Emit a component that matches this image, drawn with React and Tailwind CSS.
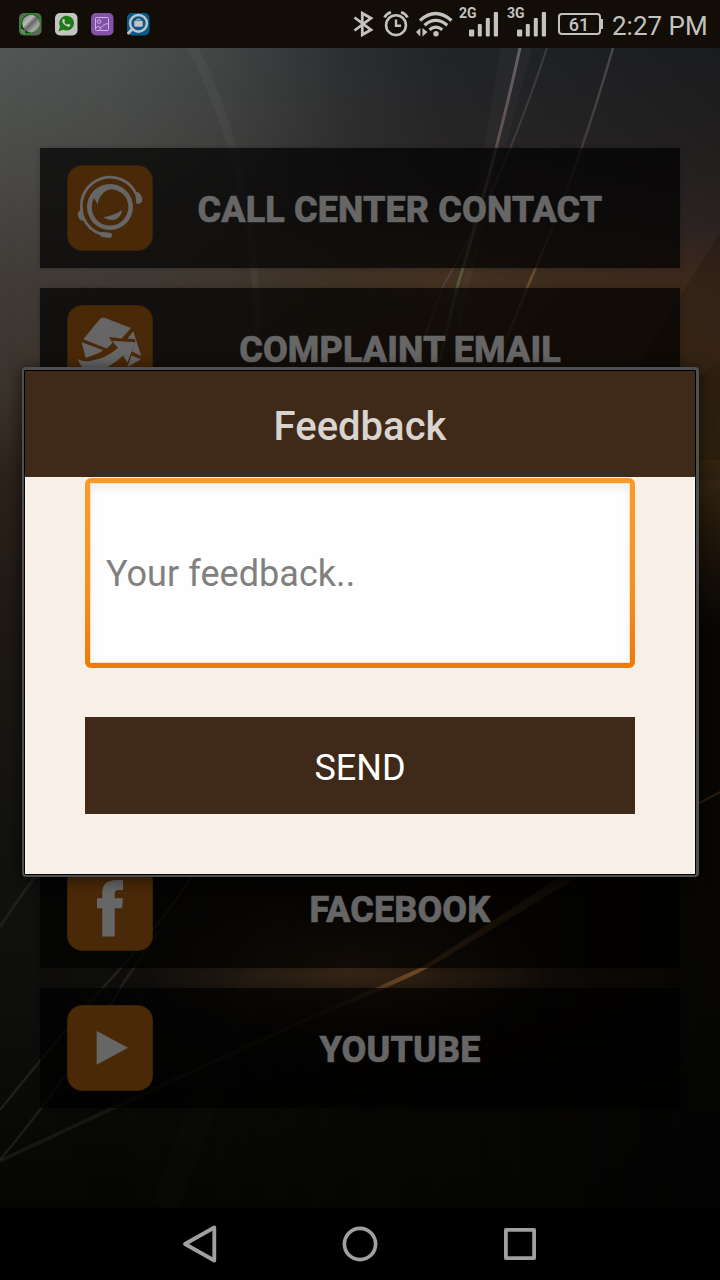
const LIGHT = '#c4c2c0';

function Wallpaper() {
  return (
    <svg className="absolute inset-0 h-full w-full" viewBox="0 48 720 1160" preserveAspectRatio="none" aria-hidden="true">
      <defs>
        <linearGradient id="mid" gradientUnits="userSpaceOnUse" x1="0" y1="48" x2="0" y2="1208">
          <stop offset="0" stopColor="#222529" />
          <stop offset="0.07" stopColor="#272627" />
          <stop offset="0.13" stopColor="#2d2625" />
          <stop offset="0.2" stopColor="#3f2f20" />
          <stop offset="0.3" stopColor="#3c2a18" />
          <stop offset="0.5" stopColor="#150e08" />
          <stop offset="0.8" stopColor="#140e0a" />
          <stop offset="0.9" stopColor="#080705" />
          <stop offset="1" stopColor="#060604" />
        </linearGradient>
        <linearGradient id="left" gradientUnits="userSpaceOnUse" x1="0" y1="48" x2="0" y2="1208">
          <stop offset="0" stopColor="#525654" />
          <stop offset="0.07" stopColor="#4d4f4c" />
          <stop offset="0.13" stopColor="#484643" />
          <stop offset="0.2" stopColor="#403b37" />
          <stop offset="0.29" stopColor="#3b342d" />
          <stop offset="0.37" stopColor="#2c221a" />
          <stop offset="0.48" stopColor="#201914" />
          <stop offset="0.58" stopColor="#181611" />
          <stop offset="0.7" stopColor="#11110f" />
          <stop offset="0.82" stopColor="#0e0e0c" />
          <stop offset="1" stopColor="#050503" />
        </linearGradient>
        <linearGradient id="right" gradientUnits="userSpaceOnUse" x1="0" y1="48" x2="0" y2="1208">
          <stop offset="0" stopColor="#1a1c1f" />
          <stop offset="0.08" stopColor="#211e1e" />
          <stop offset="0.15" stopColor="#2a2222" />
          <stop offset="0.2" stopColor="#3d281b" />
          <stop offset="0.27" stopColor="#3e2a1a" />
          <stop offset="0.35" stopColor="#3c2b14" />
          <stop offset="0.42" stopColor="#20160b" />
          <stop offset="0.5" stopColor="#080604" />
          <stop offset="0.8" stopColor="#070604" />
          <stop offset="1" stopColor="#020202" />
        </linearGradient>
        <linearGradient id="fadeL" x1="0" x2="1" y1="0" y2="0">
          <stop offset="0" stopColor="#fff" />
          <stop offset="0.25" stopColor="#e4e4e4" />
          <stop offset="0.5" stopColor="#a8a8a8" />
          <stop offset="0.8" stopColor="#303030" />
          <stop offset="1" stopColor="#000" />
        </linearGradient>
        <linearGradient id="fadeR" x1="0" x2="1" y1="0" y2="0">
          <stop offset="0" stopColor="#000" />
          <stop offset="1" stopColor="#fff" />
        </linearGradient>
        <mask id="maskL"><rect x="0" y="48" width="440" height="1160" fill="url(#fadeL)" /></mask>
        <mask id="maskR"><rect x="440" y="48" width="280" height="1160" fill="url(#fadeR)" /></mask>
        <radialGradient id="glow">
          <stop offset="0" stopColor="#5d4022" stopOpacity="0.5" />
          <stop offset="0.5" stopColor="#5d4022" stopOpacity="0.22" />
          <stop offset="1" stopColor="#5d4022" stopOpacity="0" />
        </radialGradient>
        <linearGradient id="ray" gradientUnits="userSpaceOnUse" x1="0" y1="48" x2="0" y2="380">
          <stop offset="0" stopColor="#626166" />
          <stop offset="0.3" stopColor="#5e4e48" />
          <stop offset="0.6" stopColor="#5c6040" />
          <stop offset="1" stopColor="#3a3b34" />
        </linearGradient>
        <linearGradient id="ray2" gradientUnits="userSpaceOnUse" x1="0" y1="48" x2="0" y2="380">
          <stop offset="0" stopColor="#484648" />
          <stop offset="0.5" stopColor="#3c3231" />
          <stop offset="0.7" stopColor="#6b4e2e" />
          <stop offset="1" stopColor="#3f3618" />
        </linearGradient>
        <linearGradient id="streak" gradientUnits="userSpaceOnUse" x1="320" y1="1015" x2="578" y2="877">
          <stop offset="0" stopColor="#91602f" stopOpacity="0" />
          <stop offset="0.35" stopColor="#91602f" stopOpacity="0.65" />
          <stop offset="1" stopColor="#91602f" stopOpacity="0.2" />
        </linearGradient>
      </defs>
      <rect x="0" y="48" width="720" height="1160" fill="url(#mid)" />
      <rect x="0" y="48" width="440" height="1160" fill="url(#left)" mask="url(#maskL)" />
      <rect x="440" y="48" width="280" height="1160" fill="url(#right)" mask="url(#maskR)" />
      <ellipse cx="450" cy="282" rx="90" ry="60" fill="url(#glow)" opacity="0.4" />
      <ellipse cx="350" cy="965" rx="210" ry="75" fill="url(#glow)" />
      <path d="M187 48 Q262 190 253 380 L260 380 Q268 190 199 48Z" fill="#fff" fillOpacity="0.035" />
      <path d="M501 48 H532 L468 290 L450 380 L470 230Z" fill="#8080a0" fillOpacity="0.06" />
      <g fill="none">
        <path d="M520 48 Q498 150 457 288 L435 380" stroke="url(#ray)" strokeWidth="3" />
        <path d="M547 48 Q500 190 442 288 L410 380" stroke="#555054" strokeWidth="2" strokeOpacity="0.55" />
        <path d="M613 48 Q575 180 527 288 L492 375" stroke="url(#ray2)" strokeWidth="2.5" />
      </g>
      <path d="M720 232 L680 297 L628 380 V460 H720Z" fill="#120c04" fillOpacity="0.22" />
      <path d="M720 362 L698 378 V480 H720Z" fill="#1c1402" fillOpacity="0.25" />
      <g fill="none" stroke="#67615a">
        <path d="M0 927 Q20 895 60 845" strokeWidth="3" strokeOpacity="0.18" />
        <path d="M0 1110 Q60 1035 110 980 T193 875" strokeWidth="2.5" strokeOpacity="0.24" />
        <path d="M0 1160 Q75 1070 122 985 L160 930" strokeWidth="2.5" strokeOpacity="0.22" />
        <path d="M0 1161 Q150 1090 372 990" strokeWidth="3.5" strokeOpacity="0.16" />
        <path d="M165 1208 Q210 1080 260 968 L285 880" strokeWidth="28" strokeOpacity="0.03" />
      </g>
      <path d="M320 1015 Q380 985 422 967 L560 877 L578 877 L430 967 Q385 990 320 1015Z" fill="url(#streak)" />
      <path d="M698 804 L720 792" stroke="#5a4420" strokeOpacity="0.4" strokeWidth="2" />
    </svg>
  );
}

function CallIcon() {
  return (
    <svg className="h-full w-full" viewBox="0 0 86 86" fill="none">
      <circle cx="43" cy="42" r="23" fill="#666" />
      <path d="M26.800 33 Q28.600 35.500 30.800 39.500 Q31 34 34.300 30.500 Q38 24.500 45 24.300 Q61 27 61.300 42.300 A18.300 18.300 0 0 1 24.700 42.300 Q24.600 37 26.800 33Z" fill="#4a2908" />
      <path d="M36.300 52.300 Q47 50.500 55 45.300 Q54.500 51 49.500 54 Q43 56.500 36.300 52.300Z" fill="#666" />
      <path d="M14.800 46 A28.700 28.700 0 0 1 69.600 30 M15.500 51 Q21 65 35 69.500" stroke="#666" strokeWidth="2.800" />
      <path d="M15.500 43.500 L18 55.500 Q12.500 57 11 51 Q9.700 46 15.500 43.500ZM68 27.200 Q73 26 75 33 Q77 38.500 69.500 39Z" fill="#666" />
      <rect x="33" y="67.300" width="12" height="5.200" rx="2.400" fill="#666" transform="rotate(7 39 70)" />
    </svg>
  );
}

function MailIcon() {
  return (
    <svg className="h-full w-full" viewBox="0 0 86 86" fill="#666">
      <path d="M16.300 34.300 L32.500 14.500 Q34.500 11.800 38 13 L64 23 L54.700 33.600 L42 32 L45.600 38 L39.700 43.500Z" />
      <path d="M14.700 37.300 L36.300 45.300 L32 48 L18.700 53Z" />
      <path d="M66.300 26.300 L74.300 51 L65 46.500 L68.600 34.500 L60.500 33.500Z" />
      <path d="M45 35.700 L68 37.200 L60.500 57.500 L56 50.500 Q44 63 27 66 Q14 66 11 54 Q15 57 23 56 Q38 54 51 43Z" />
      <path d="M60.500 62 L64.500 50.500 L74 54.300Z" />
    </svg>
  );
}

function FacebookIcon() {
  return (
    <svg className="h-full w-full" viewBox="0 0 86 86" fill="#666">
      <path d="M56 15 H49 Q35.500 15.500 35.300 27 V33.300 H30 V43.300 H35.300 V71.500 H47.700 V43.300 H55 L56 33.300 H47.700 V28.500 Q47.700 25.200 51 25 H56Z" />
    </svg>
  );
}

function PlayIcon() {
  return (
    <svg className="h-full w-full" viewBox="0 0 86 86" fill="#666">
      <path d="M29.700 26 L61 42.700 L29.700 59.700Z" />
    </svg>
  );
}

function MenuCard({ icon, children }) {
  return (
    <div className="flex h-[120px] items-start bg-black/70 pt-[17px] pr-[33px] pl-[27px] shadow-[0_0_5px_rgba(0,0,0,0.2)]">
      <div className="h-[86px] w-[86px] shrink-0 rounded-[15px] border border-[#3a2108] bg-[#4a2908]">
        <div className="-m-px h-[86px] w-[86px]">{icon}</div>
      </div>
      <div className="flex h-[90px] flex-1 items-center justify-center text-[36px] font-extrabold tracking-[0.1px] whitespace-nowrap text-[#666] [-webkit-text-stroke:0.6px_#666]">
        {children}
      </div>
    </div>
  );
}

function Signal({ label }) {
  return (
    <div className="relative h-[48px] w-[39px]">
      <span className="absolute top-[6px] -left-px text-[14px] leading-[15px] font-bold">{label}</span>
      <svg className="h-[48px] w-[39px]" viewBox="0 0 39 48" fill={LIGHT}>
        <rect x="9" y="29.500" width="5.200" height="7" rx="1" />
        <rect x="17.800" y="24" width="4" height="12.500" rx="1" />
        <rect x="25.800" y="18" width="4" height="18.500" rx="1" />
        <rect x="33.800" y="12" width="4.200" height="24.500" rx="1" />
      </svg>
    </div>
  );
}

function StatusBar() {
  return (
    <header className="flex h-[48px] shrink-0 items-center bg-[#120d07] pl-[18px] text-[#c4c2c0]">
      <div className="flex gap-3">
        <svg className="h-6 w-6" viewBox="0 0 24 24">
          <defs>
            <linearGradient id="steel" x1="0" y1="0" x2="1" y2="1">
              <stop offset="0" stopColor="#777" />
              <stop offset="0.35" stopColor="#bbb" />
              <stop offset="0.5" stopColor="#666" />
              <stop offset="0.75" stopColor="#aaa" />
              <stop offset="1" stopColor="#444" />
            </linearGradient>
          </defs>
          <rect x="1" y="1" width="22.500" height="22.500" rx="5" fill="#5e6659" />
          <path d="M3 21 Q1 10 6 4 Q14 -1 21 5 Q24 13 18 19 Q11 22 3 22Z" fill="#22351b" stroke="#139a17" strokeWidth="1.200" />
          <circle cx="13" cy="11.500" r="8.800" fill="url(#steel)" />
          <path d="M4 17 V21 M6 18 V22" stroke="#aaa" strokeWidth="1.200" />
        </svg>
        <svg className="h-6 w-6" viewBox="0 0 24 24">
          <rect x="1" y="1" width="22.500" height="22.500" rx="5" fill="#c4c3c3" />
          <path d="M4.500 19.500 L6 14.500 A7.400 7.400 0 1 1 9.300 17.800Z" fill="#1c7c16" />
          <path d="M8.800 7.300 Q7.300 9.500 10 12.300 Q13.500 15.900 16.200 14 L16.300 12.800 L14.200 11.700 L13 12.800 Q11.200 12 10.200 10 L11 8.800 L10.200 7Z" fill="#d0d0d0" />
        </svg>
        <svg className="h-6 w-6" viewBox="0 0 24 24" fill="none" stroke="#cab6d9" strokeWidth="1">
          <rect x="1" y="1" width="22.500" height="22.500" rx="5" fill="#8552ab" stroke="none" />
          <rect x="5.500" y="5.500" width="13" height="13" rx="1" />
          <circle cx="9" cy="9.500" r="1.800" />
          <path d="M9.500 18.500 Q12 12 18.500 11.500 M5.500 16 Q8 13.500 10.700 15.500" />
        </svg>
        <svg className="h-6 w-6" viewBox="0 0 24 24" fill="none">
          <rect x="1" y="1" width="22.500" height="22.500" rx="5" fill="#065b8c" />
          <circle cx="12.500" cy="11.300" r="8.400" stroke="#c4c3c3" strokeWidth="2.500" />
          <path d="M6.500 17 L2.500 21" stroke="#c4c3c3" strokeWidth="3" strokeLinecap="round" />
          <rect x="8.300" y="8.700" width="8.400" height="6" rx="0.800" fill="#c4c3c3" />
          <path d="M10.800 8.500 V7.300 H14.200 V8.500" stroke="#c4c3c3" />
        </svg>
      </div>
      <svg className="ml-[202px] h-[48px] w-[110px]" viewBox="352 0 110 48" fill="none" stroke={LIGHT}>
        <path d="M354.500 17.500 L371 29.800 L362.300 34.800 V13.200 L371 18.200 L354.500 30.500" strokeWidth="2.800" />
        <circle cx="396" cy="25.200" r="9.900" strokeWidth="2.600" />
        <path d="M396 19.500 V25.800 H401" strokeWidth="2.400" />
        <path d="M384.500 17.500 Q386.500 13.500 391 12.300 M407.500 17.500 Q405.500 13.500 401 12.300" strokeWidth="2.600" />
        <path d="M420 20.500 Q435.500 6.500 451.500 20.500 M424.500 25.300 Q435.500 15.500 447.300 25.300 M429.500 29.700 Q435.800 24.500 442.300 29.700" strokeWidth="3.200" />
        <circle cx="436" cy="33.800" r="2.700" fill={LIGHT} stroke="none" />
        <path d="M420.300 28 V36.500 L416 32Z M422.500 28 V36.500 L427.500 32Z" fill={LIGHT} stroke="none" />
      </svg>
      <div className="-ml-[2px] flex gap-[9px]">
        <Signal label="2G" />
        <Signal label="3G" />
      </div>
      <div className="relative ml-[11px] flex h-[22px] w-[43px] items-center justify-center rounded-[4px] border-2 border-[#c4c2c0] pt-[2px] text-[18px] leading-none font-medium">
        <span className="-ml-px">61</span>
        <span className="absolute top-[4px] -right-[4px] h-[10px] w-[2px] bg-[#c4c2c0]" />
      </div>
      <span className="ml-[11px] pt-[3px] text-[26px] leading-none whitespace-nowrap">2:27 PM</span>
    </header>
  );
}

function FeedbackDialog() {
  return (
    <div className="absolute top-[367px] left-[22px] w-[677px] rounded-[4px] border-3 border-b-2 border-l-2 border-[#4f4f50] bg-black pr-px pb-px pl-px shadow-[0_2px_14px_2px_rgba(0,0,0,0.5)]">
      <div className="mt-px flex h-[503px] flex-col bg-[#f8f0e6]">
        <h1 className="flex h-[106px] shrink-0 items-center justify-center bg-[#3f2a19] pt-[5px] text-[40px] font-medium text-[#d9d4d0]">
          Feedback
        </h1>
        <div className="mx-[60px] mt-px h-[190px] rounded-[6px] bg-linear-to-b from-[#fd9a27] via-[#f9921e] to-[#ef7a05] p-[5px]">
          <div className="flex h-full items-center border border-[#f5e3cc] bg-[#fefefe] pt-[2px] pl-[15px] text-[36px] tracking-[0.05px] text-[#808080] shadow-[inset_0_5px_10px_rgba(0,0,0,0.06)]">
            Your feedback..
          </div>
        </div>
        <button className="mx-[60px] mt-[49px] flex h-[97px] items-center justify-center bg-[#3f2a19] pt-[4px] text-[36px] text-white">
          SEND
        </button>
      </div>
    </div>
  );
}

function NavBar() {
  return (
    <nav className="flex h-[72px] shrink-0 items-center justify-center gap-[120px] bg-black">
      <svg className="h-10 w-10" viewBox="0 0 40 40" fill="none" stroke="#a0a0a0" strokeWidth="3.800" strokeLinejoin="round">
        <path d="M34.300 3.500 V36.500 L5 20Z" />
      </svg>
      <svg className="h-10 w-10" viewBox="0 0 40 40" fill="none" stroke="#a0a0a0" strokeWidth="3.700">
        <circle cx="20" cy="20" r="15.600" />
      </svg>
      <svg className="h-10 w-10" viewBox="0 0 40 40" fill="none" stroke="#a0a0a0" strokeWidth="3.800" strokeLinejoin="round">
        <rect x="5.900" y="5.900" width="28.200" height="28.200" />
      </svg>
    </nav>
  );
}

export default function App() {
  return (
    <div className="relative flex h-[1280px] w-[720px] flex-col overflow-hidden bg-black font-['Roboto',sans-serif]">
      <StatusBar />
      <main className="relative flex-1">
        <Wallpaper />
        <div className="relative flex h-full flex-col justify-between px-10 py-[100px]">
          <div className="flex flex-col gap-5">
            <MenuCard icon={<CallIcon />}>CALL CENTER CONTACT</MenuCard>
            <MenuCard icon={<MailIcon />}>COMPLAINT EMAIL</MenuCard>
          </div>
          <div className="flex flex-col gap-5">
            <MenuCard icon={<FacebookIcon />}>FACEBOOK</MenuCard>
            <MenuCard icon={<PlayIcon />}>YOUTUBE</MenuCard>
          </div>
        </div>
      </main>
      <NavBar />
      <FeedbackDialog />
    </div>
  );
}
